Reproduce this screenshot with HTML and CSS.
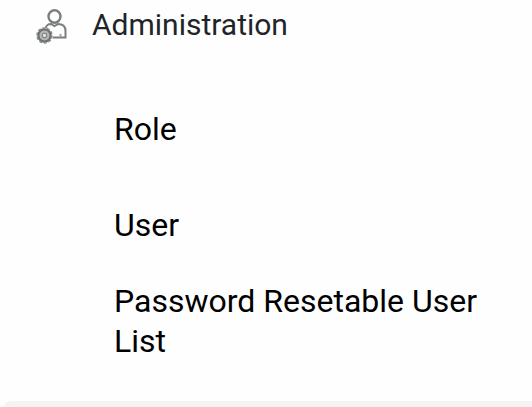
FILE: index.html
```
<!DOCTYPE html>
<html lang="en">
<head>
    <meta charset="UTF-8">
    <meta name="viewport" content="width=device-width, initial-scale=1.0">
    <title>Administration</title>
    <link rel="stylesheet" href="styles.css">
</head>
<body>
    <nav class="sidebar">
        <button class="menu-header" type="button">
            <svg class="menu-icon" viewBox="0 0 32 38" fill="none" stroke="#7b7e7e" stroke-width="2" aria-hidden="true">
                <ellipse cx="18.500" cy="10.500" rx="6" ry="6.200" stroke-width="2.400"/>
                <path d="M10 22c0-2 2-4 5-4l3.500 2 3.500-2c5 0 7.500 3 7.500 7v6.500H17"/>
                <path d="M24.500 28v3" stroke="#a0a3a3"/>
                <circle cx="8.500" cy="29.500" r="6" stroke="#6f7272" stroke-width="2.500"/>
                <circle cx="8.500" cy="29.500" r="7.500" stroke="#858888" stroke-width="1.500" stroke-dasharray="3 1.700"/>
                <circle cx="8.500" cy="29.500" r="3.800" stroke="#b4b7b7" stroke-width="2"/>
                <circle cx="8.500" cy="29.500" r="2.200" stroke="#858888" stroke-width="1.500"/>
                <circle cx="8.500" cy="29.500" r="1.200" fill="#e0e2e2" stroke="none"/>
            </svg>
            <span>Administration</span>
        </button>

        <!-- Submenu -->
        <ul class="submenu">
            <li><a href="#role">Role</a></li>
            <li><a href="#user">User</a></li>
            <li><a href="#password">Password Resetable User List</a></li>
        </ul>

        <div class="next-section"></div>
    </nav>
</body>
</html>
```

FILE: styles.css
```
* {
    box-sizing: border-box;
}
body {
    margin: 0;
    background-color: #fefefe;
    font-family: Roboto, sans-serif;
    overflow: hidden;
}
.sidebar {
    display: flex;
    flex-direction: column;
    height: 100vh;
}
.menu-header {
    display: flex;
    align-items: center;
    gap: 24px;
    padding: 5px 36px;
    border: none;
    background: none;
    color: #212529;
    font-family: inherit;
    font-size: 30px;
    line-height: 40px;
    cursor: pointer;
}
.menu-icon {
    width: 32px;
    height: 38px;
}
.submenu {
    list-style: none;
    margin: 31px 0 32px;
    padding: 0;
}
.submenu a {
    display: flex;
    align-items: center;
    min-height: 96px;
    padding: 0 32px 0 114px;
    color: #000;
    font-size: 32px;
    line-height: 40px;
    text-decoration: none;
}
.next-section {
    flex: 1;
    margin-left: 4px;
    background-color: #f4f4f4;
    border-top-left-radius: 8px;
}
```
